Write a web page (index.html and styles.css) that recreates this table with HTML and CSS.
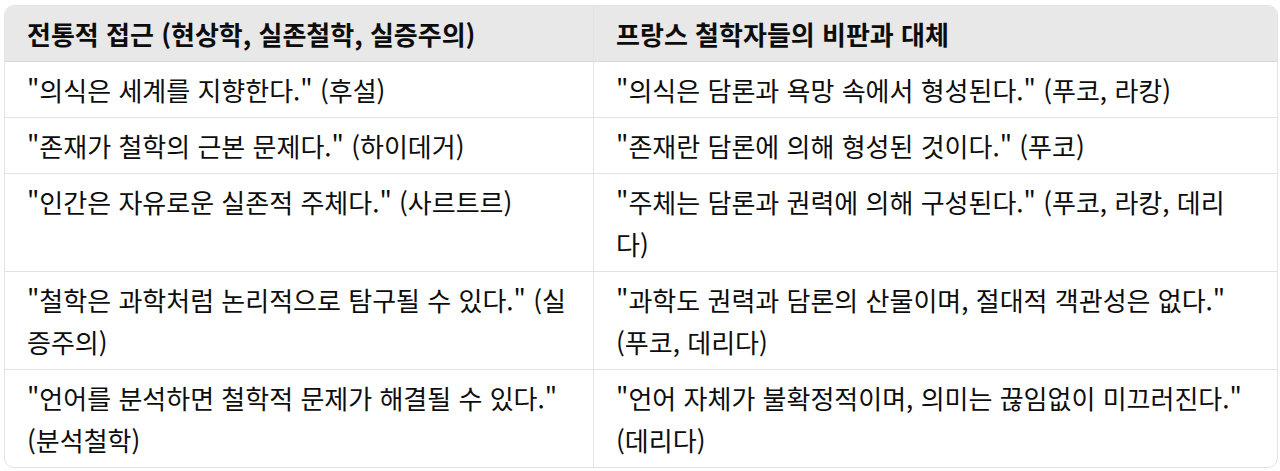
FILE: index.html
```html
<!DOCTYPE html>
<html lang="ko">
<head>
<meta charset="utf-8">
<title>Table</title>
<link rel="stylesheet" href="styles.css">
</head>
<body>
<div class="wrap">
<table class="cmp">
<colgroup><col class="c1"><col class="c2"></colgroup>
<thead>
<tr><th>전통적 접근 (현상학, 실존철학, 실증주의)</th><th>프랑스 철학자들의 비판과 대체</th></tr>
</thead>
<tbody>
<tr><td>"의식은 세계를 지향한다." (후설)</td><td>"의식은 담론과 욕망 속에서 형성된다." (푸코, 라캉)</td></tr>
<tr><td>"존재가 철학의 근본 문제다." (하이데거)</td><td>"존재란 담론에 의해 형성된 것이다." (푸코)</td></tr>
<tr><td>"인간은 자유로운 실존적 주체다." (사르트르)</td><td>"주체는 담론과 권력에 의해 구성된다." (푸코, 라캉, 데리다)</td></tr>
<tr><td>"철학은 과학처럼 논리적으로 탐구될 수 있다." (실증주의)</td><td>"과학도 권력과 담론의 산물이며, 절대적 객관성은 없다." (푸코, 데리다)</td></tr>
<tr><td>"언어를 분석하면 철학적 문제가 해결될 수 있다." (분석철학)</td><td>"언어 자체가 불확정적이며, 의미는 끊임없이 미끄러진다." (데리다)</td></tr>
</tbody>
</table>
</div>
</body>
</html>
```
FILE: styles.css
```css
html, body { margin: 0; padding: 0; background: #ffffff; }
body {
  font-family: "Noto Sans CJK KR", "Noto Sans", sans-serif;
  color: #0d0d0d;
}
.wrap { padding: 5px 2px 0 4px; }
.cmp {
  width: 1274px;
  border-collapse: separate;
  border-spacing: 0;
  border: 1px solid #e3e3e3;
  border-radius: 10px;
  overflow: hidden;
  font-size: 26px;
  line-height: 42px;
}
.c1 { width: 590px; }
.c2 { width: 684px; }
.cmp th, .cmp td {
  text-align: left;
  vertical-align: top;
  padding: 7px 22px 6px;
  border-right: 1px solid #e3e3e3;
  border-bottom: 1px solid #e3e3e3;
}
.cmp th:last-child, .cmp td:last-child { border-right: none; }
.cmp tbody tr:last-child td { border-bottom: none; }
.cmp th {
  background: #e8e8e8;
  font-weight: 700;
  border-bottom-color: #d6d6d6;
}
.cmp td { font-weight: 400; }
```
